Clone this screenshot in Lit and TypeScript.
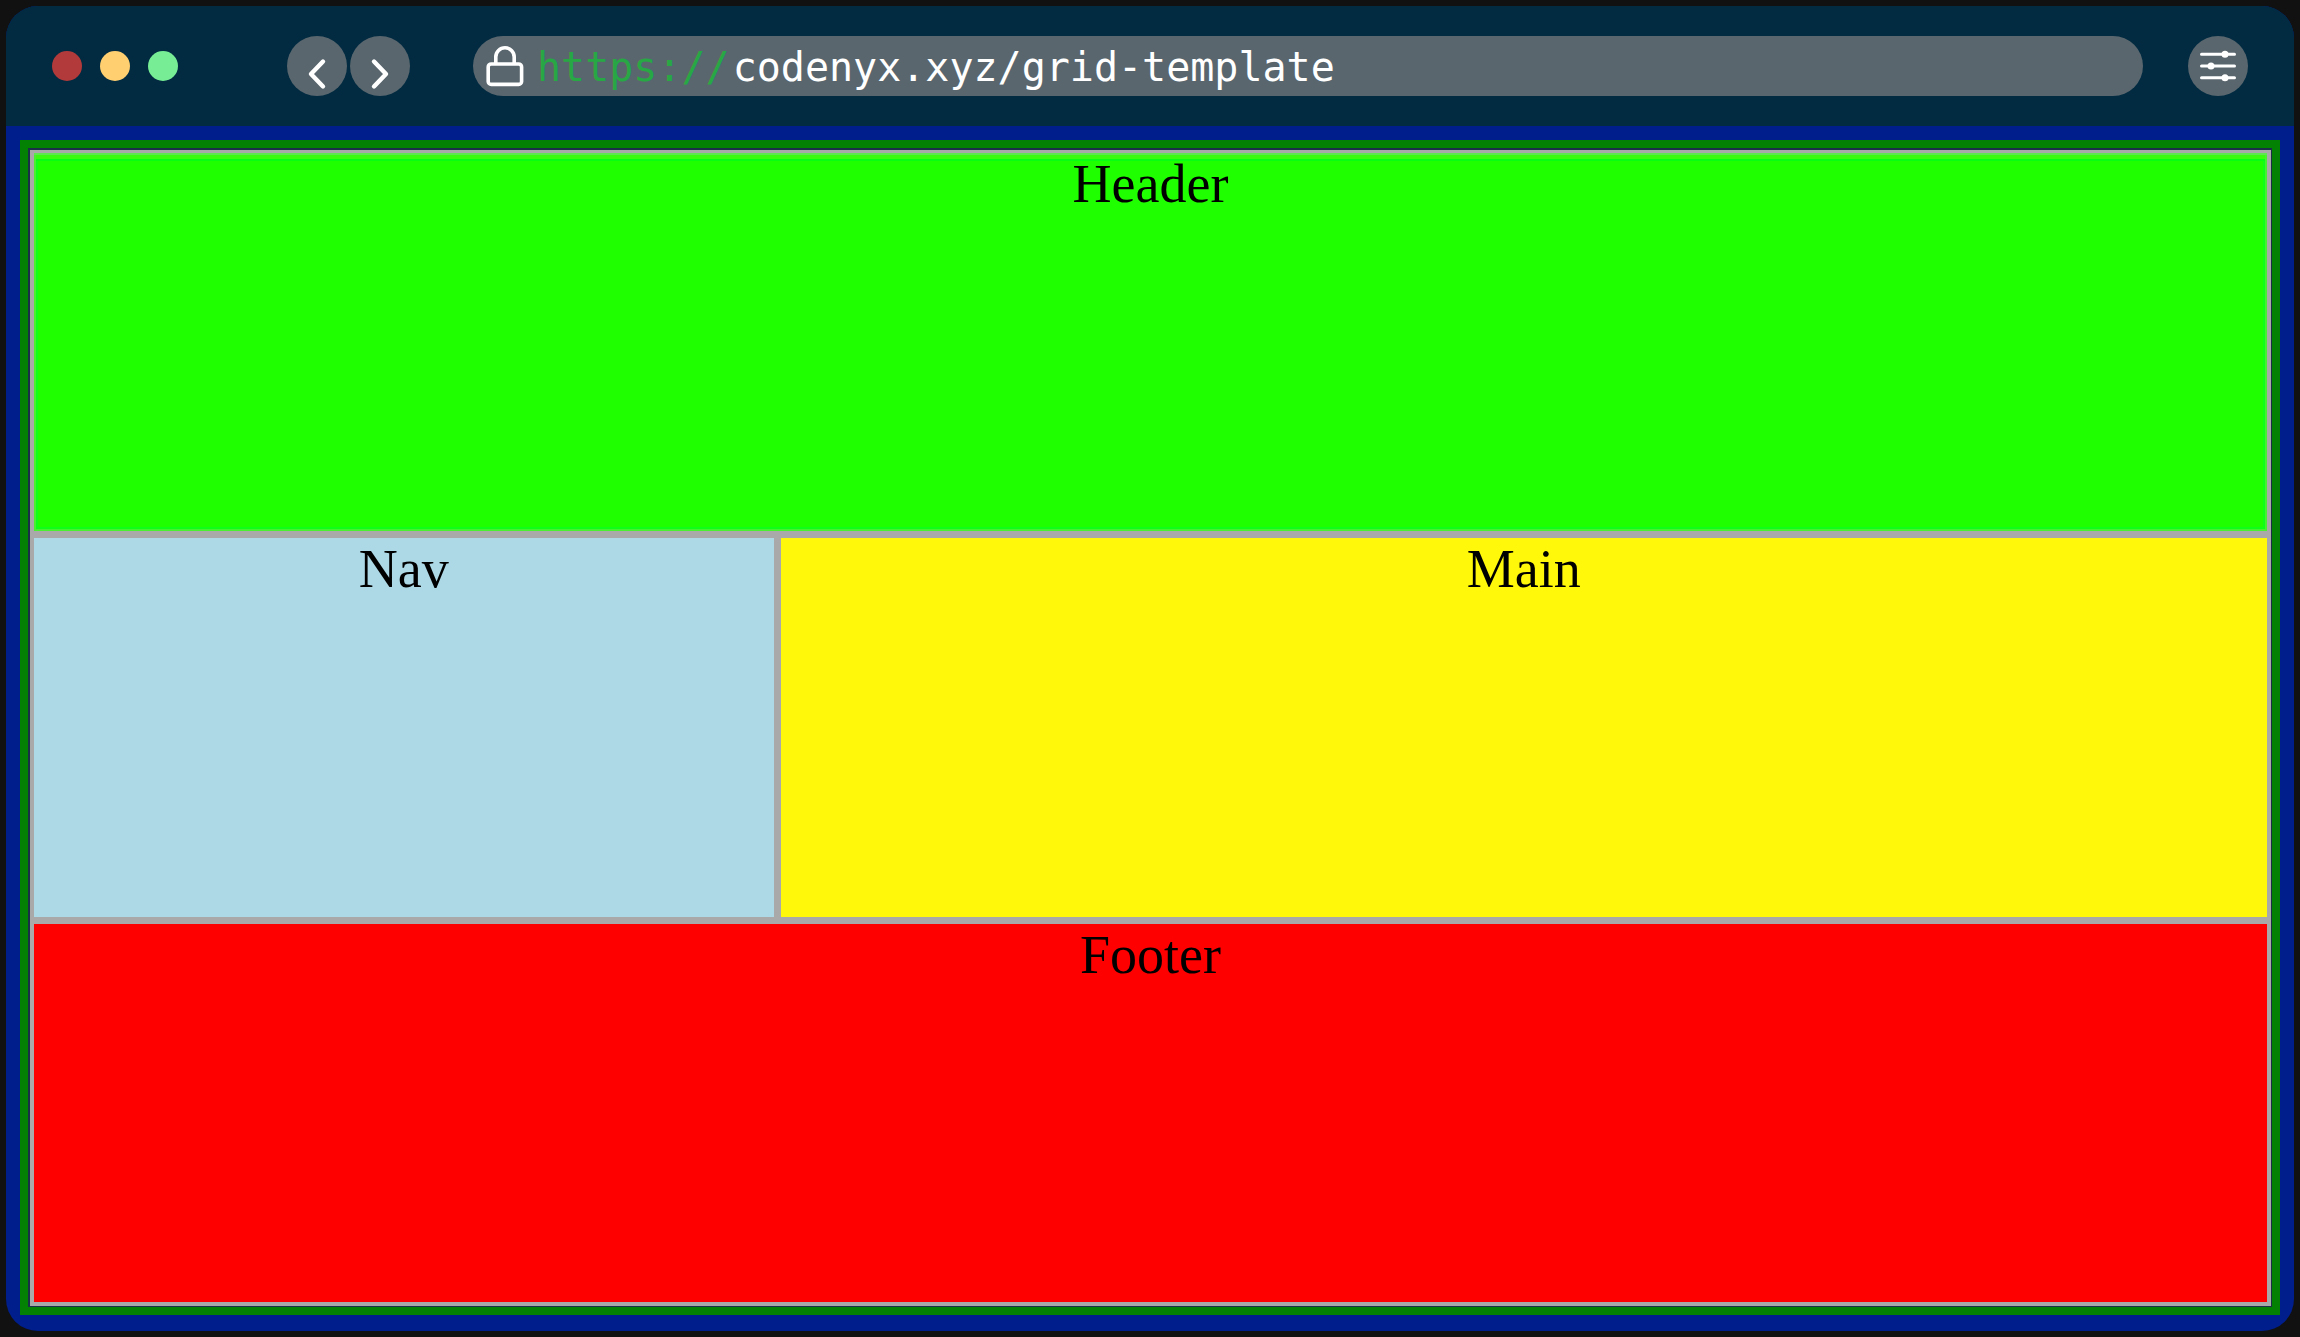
import { LitElement, html, css } from "lit";
import { customElement } from "lit/decorators.js";

@customElement("address-bar")
export class AddressBar extends LitElement {
  static styles = css`
    :host {
      display: block;
      min-width: 0;
    }
    .bar {
      display: flex;
      align-items: center;
      height: 60px;
      box-sizing: border-box;
      padding: 2px 32px 0 12px;
      border-radius: 30px;
      background: #59666e;
      color: #fff;
      font: 40px/48px "DejaVu Sans Mono", monospace;
    }
    .lock {
      flex: none;
      width: 40px;
      height: 44px;
      margin-right: 12px;
    }
    .scheme {
      margin-right: 3px;
      color: #28a745;
    }
    .url {
      flex: 1;
      min-width: 0;
      height: 48px;
      padding: 0;
      border: 0;
      outline: 0;
      background: none;
      color: inherit;
      font: inherit;
    }
  `;

  render() {
    return html`
      <label class="bar">
        <svg class="lock" viewBox="0 0 40 44" fill="none" stroke="#fff" stroke-width="3.6" aria-hidden="true">
          <rect x="3.2" y="19" width="33.4" height="20.4" rx="3" />
          <path d="M10.8 19V12a9.2 9.2 0 0 1 18.4 0v7" />
        </svg>
        <span class="scheme">https://</span>
        <input class="url" type="text" aria-label="Address" spellcheck="false" value="codenyx.xyz/grid-template" />
      </label>
    `;
  }
}

@customElement("browser-toolbar")
export class BrowserToolbar extends LitElement {
  static styles = css`
    :host {
      display: block;
    }
    .toolbar {
      display: flex;
      align-items: center;
      height: 120px;
      box-sizing: border-box;
      padding: 0 46px;
      background: #022b41;
    }
    .lights {
      display: flex;
      gap: 18px;
      margin-right: 109px;
    }
    .light {
      width: 30px;
      height: 30px;
      border-radius: 50%;
    }
    .close {
      background: #b33a3a;
    }
    .minimize {
      background: #ffcf70;
    }
    .maximize {
      background: #77ee95;
    }
    .history {
      display: flex;
      gap: 3px;
      margin-right: 63px;
    }
    .round {
      display: block;
      flex: none;
      width: 60px;
      height: 60px;
      padding: 0;
      border: 0;
      border-radius: 50%;
      background: #59666e;
    }
    .icon {
      display: block;
      width: 60px;
      height: 60px;
    }
    address-bar {
      flex: 1;
      margin-right: 45px;
    }
  `;

  render() {
    return html`
      <header class="toolbar">
        <div class="lights">
          <span class="light close"></span>
          <span class="light minimize"></span>
          <span class="light maximize"></span>
        </div>
        <nav class="history">
          <button class="round" type="button" aria-label="Back">
            <svg class="icon" viewBox="0 0 60 60" fill="none" stroke="#fff" stroke-width="4.4" stroke-linecap="round" stroke-linejoin="round">
              <path d="M36 25.5L24 38L36 50.5" />
            </svg>
          </button>
          <button class="round" type="button" aria-label="Forward">
            <svg class="icon" viewBox="0 0 60 60" fill="none" stroke="#fff" stroke-width="4.4" stroke-linecap="round" stroke-linejoin="round">
              <path d="M24 25.5L36 38L24 50.5" />
            </svg>
          </button>
        </nav>
        <address-bar></address-bar>
        <button class="round" type="button" aria-label="Settings">
          <svg class="icon" viewBox="0 0 60 60" stroke="#fff" stroke-width="3" stroke-linecap="round" fill="#fff">
            <path d="M13.5 18.3H46.5M13.5 30H46.5M13.5 41.7H46.5" />
            <g stroke="none">
              <circle cx="37" cy="18.3" r="3.5" />
              <circle cx="23" cy="30" r="3.5" />
              <circle cx="37" cy="41.7" r="3.5" />
            </g>
          </svg>
        </button>
      </header>
    `;
  }
}

@customElement("grid-demo")
export class GridDemo extends LitElement {
  static styles = css`
    :host {
      display: flex;
    }
    .frame {
      display: flex;
      flex: 1;
      border: 8px solid #028102;
      padding: 2px 1px 1px 2px;
      background: #1b3048;
    }
    .grid {
      flex: 1;
      display: grid;
      grid-template:
        "header header header" 1fr
        "nav main main" 1fr
        "footer footer footer" 1fr / 1fr 1fr 1fr;
      gap: 7px;
      padding: 3px 4px 4px;
      background: #a9a9a9;
      color: #000;
      font: 54px/62px "Liberation Serif", "Times New Roman", serif;
      text-align: center;
    }
    .header {
      grid-area: header;
      background: #20ff00;
      box-shadow:
        inset 0 2px #60e650,
        inset 0 0 0 2px #48f030,
        inset 0 6px #3cfa10,
        inset 0 8px #08ff14,
        inset 0 0 0 4px #10ff18;
    }
    .nav {
      grid-area: nav;
      background: #add8e6;
    }
    .main {
      grid-area: main;
      background: #fff80a;
    }
    .footer {
      grid-area: footer;
      background: #ff0000;
    }
  `;

  render() {
    return html`
      <div class="frame">
        <div class="grid">
          <header class="header">Header</header>
          <nav class="nav">Nav</nav>
          <main class="main">Main</main>
          <footer class="footer">Footer</footer>
        </div>
      </div>
    `;
  }
}

@customElement("app-root")
export class AppRoot extends LitElement {
  static styles = css`
    :host {
      display: flex;
      min-height: 100vh;
      box-sizing: border-box;
      padding: 6px;
      background: #111;
    }
    .window {
      flex: 1;
      display: flex;
      flex-direction: column;
      min-width: 0;
      border-radius: 32px;
      overflow: hidden;
      background: #001f8c;
    }
    grid-demo {
      flex: 1;
      margin: 14px 14px 16px;
    }
  `;

  render() {
    return html`
      <div class="window">
        <browser-toolbar></browser-toolbar>
        <grid-demo></grid-demo>
      </div>
    `;
  }
}
